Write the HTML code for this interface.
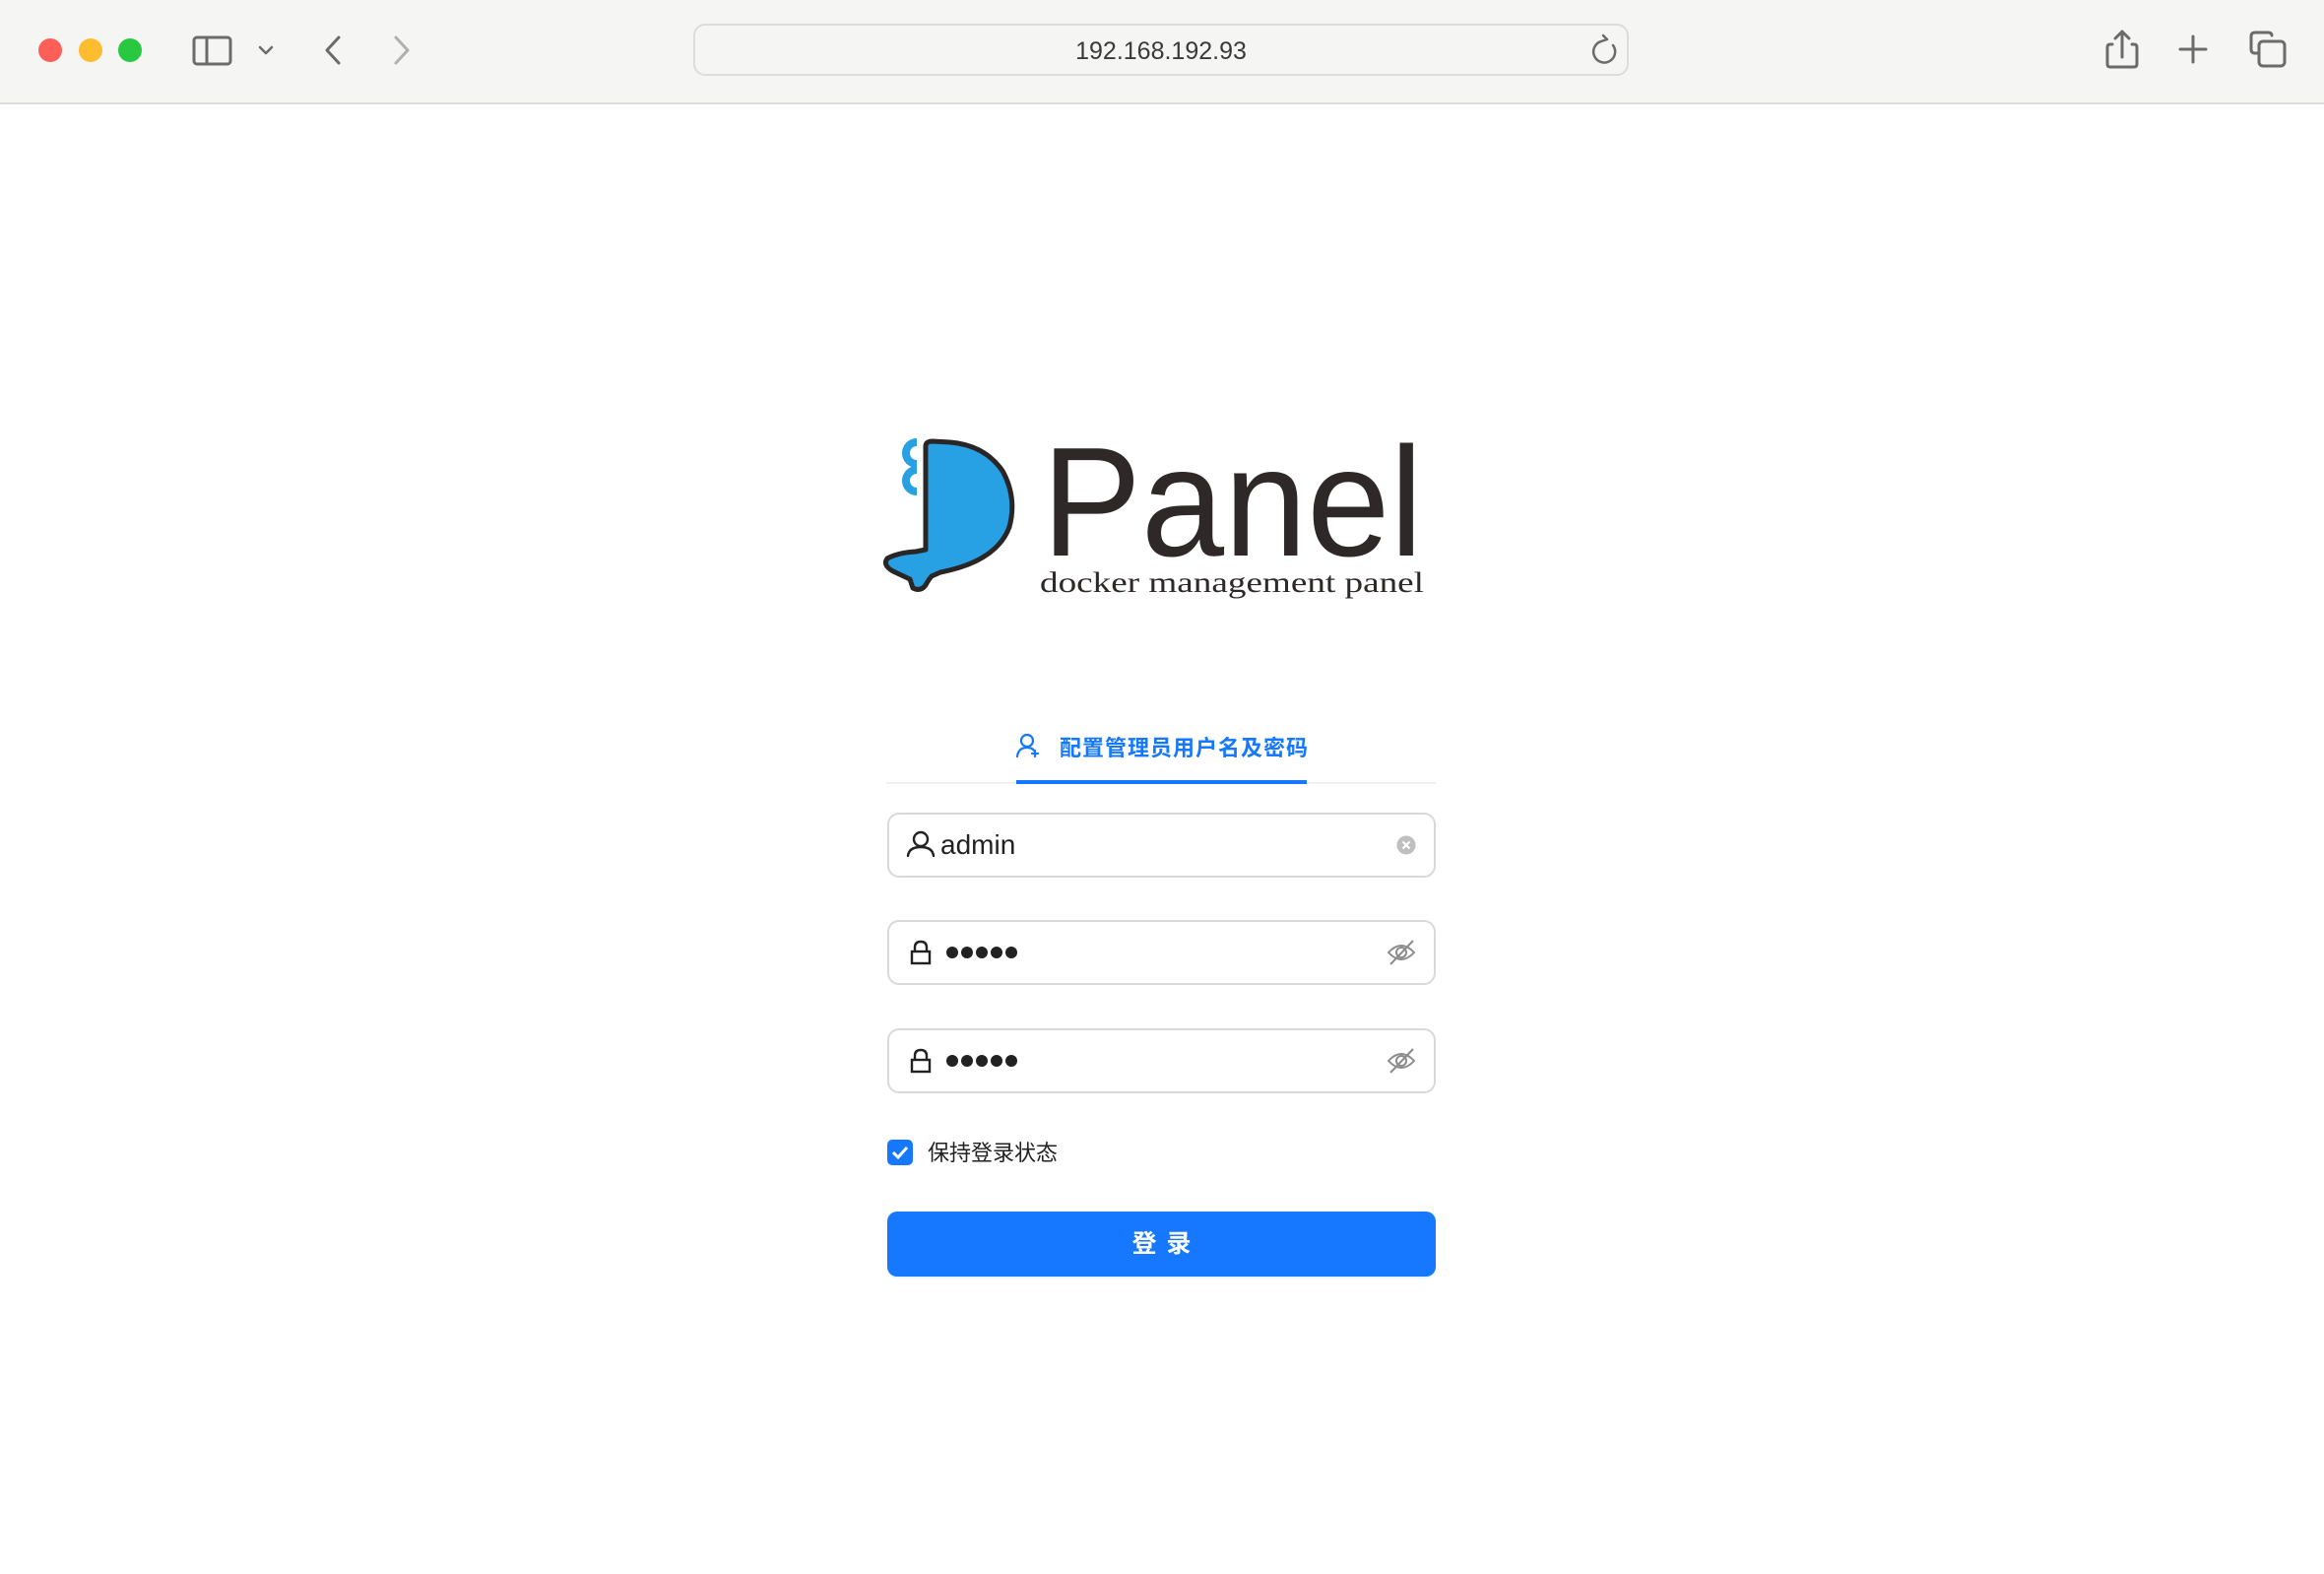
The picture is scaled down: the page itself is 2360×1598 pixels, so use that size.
<!DOCTYPE html>
<html><head><meta charset="utf-8"><style>
html,body{margin:0;padding:0;width:2360px;height:1598px;overflow:hidden;background:#fff;font-family:"Liberation Sans","Noto Sans CJK SC",sans-serif;}
.bar{position:absolute;left:0;top:0;width:2360px;height:104px;background:#f5f5f3;border-bottom:2px solid #dcdcdc;}
.url{position:absolute;left:704px;top:24px;width:950px;height:53px;border:2px solid #dcdcda;border-radius:12px;background:#f5f5f3;box-sizing:border-box;text-align:center;line-height:52px;font-size:25px;color:#3a3a3a;}
.inp{position:absolute;left:901px;width:557px;height:66px;border:2px solid #d9d9d9;border-radius:12px;box-sizing:border-box;}
.t{position:absolute;white-space:nowrap;}
</style></head><body>
<div class="bar"></div>
<div class="url">192.168.192.93</div>
<svg width="2360" height="1598" style="position:absolute;left:0;top:0" xmlns="http://www.w3.org/2000/svg">
<circle cx="51" cy="51" r="12" fill="#fe5f57"/><circle cx="92" cy="51" r="12" fill="#febc2e"/><circle cx="132" cy="51" r="12" fill="#28c840"/>
<g fill="none" stroke="#6b6b6b" stroke-width="3" stroke-linecap="round" stroke-linejoin="round">
<rect x="197" y="38" width="37" height="27" rx="3"/><line x1="210" y1="38" x2="210" y2="65"/>
<path d="M264 48 L270 54 L276 48" stroke-width="2.5"/>
<path d="M344 38 L332 51 L344 64"/>
<path d="M402 38 L414 51 L402 64" stroke="#b0b0b0"/>
<path d="M1638 46 A11 11 0 1 1 1626 42 L1632 40 L1628 36" stroke-width="2.5"/>
<path d="M2145 45 L2143 45 Q2140 45 2140 48 L2140 65 Q2140 68 2143 68 L2167 68 Q2170 68 2170 65 L2170 48 Q2170 45 2167 45 L2165 45"/>
<path d="M2155 58 L2155 32 M2148 39 L2155 32 L2162 39"/>
<path d="M2214 50 L2240 50 M2227 37 L2227 63"/>
<path d="M2307 36 Q2307 33 2303 33 L2290 33 Q2286 33 2286 37 L2286 50 Q2286 54 2290 54 L2294 54"/>
<rect x="2294" y="42" width="26" height="25" rx="4"/>
</g>
<!-- whale -->
<g>
<path d="M931 449 A11 11 0 0 0 931 471 M931 477 A11 11 0 0 0 931 499" fill="none" stroke="#27a0e4" stroke-width="8"/>
<path d="M940 453 Q940 448 947 448 L965 449 Q1000 452 1018 478 Q1033 505 1025 535 Q1012 570 955 581 L946 585 Q942 590 940 594 Q935 601 927 597 L924 588 L907 580 Q896 574 901 567 Q912 561 930 560 L940 558 Z" fill="#27a0e4" stroke="#2b2626" stroke-width="5" stroke-linejoin="round"/>
</g>
<text x="1058" y="564" font-family="Liberation Sans,sans-serif" font-size="158" fill="#2e2828" textLength="387" lengthAdjust="spacingAndGlyphs">Panel</text>
<text x="1056" y="601" font-family="Liberation Serif,serif" font-size="30" fill="#2e2828" textLength="390" lengthAdjust="spacingAndGlyphs">docker management panel</text>
<!-- tab -->
<line x1="900" y1="795" x2="1458" y2="795" stroke="#f0f0f0" stroke-width="2"/>
<line x1="1032" y1="794" x2="1327" y2="794" stroke="#1677ff" stroke-width="4"/>
<g fill="none" stroke="#1677ff" stroke-width="2.2" stroke-linecap="round">
<circle cx="1043" cy="752" r="6"/><path d="M1033 768 Q1034 759 1043 759 Q1048 759 1050 762"/><path d="M1048 765 L1054 765 M1051 762 L1051 768"/>
</g>
<!-- input icons -->
<g fill="none" stroke="#222" stroke-width="2.4" stroke-linecap="round">
<circle cx="935" cy="852" r="7"/><path d="M922 869 Q923 860 935 860 Q947 860 948 869"/>
<path d="M929 966 L929 962 Q929 956 935 956 Q941 956 941 962 L941 966"/><rect x="926" y="966" width="18" height="12"/>
<path d="M929 1076 L929 1072 Q929 1066 935 1066 Q941 1066 941 1072 L941 1076"/><rect x="926" y="1076" width="18" height="12"/>
</g>
<circle cx="1428" cy="858" r="9.5" fill="#bfbfbf"/><path d="M1424.5 854.5 L1431.5 861.5 M1431.5 854.5 L1424.5 861.5" stroke="#fff" stroke-width="2"/>
<g fill="none" stroke="#8c8c8c" stroke-width="2">
<path d="M1410 967 Q1423 953 1436 967 Q1423 981 1410 967 Z"/><circle cx="1423" cy="967" r="5"/><path d="M1412 979 L1435 955"/>
<path d="M1410 1077 Q1423 1063 1436 1077 Q1423 1091 1410 1077 Z"/><circle cx="1423" cy="1077" r="5"/><path d="M1412 1089 L1435 1065"/>
</g>
<g fill="#222"><circle cx="967" cy="967" r="6"/><circle cx="982" cy="967" r="6"/><circle cx="997" cy="967" r="6"/><circle cx="1012" cy="967" r="6"/><circle cx="1027" cy="967" r="6"/>
<circle cx="967" cy="1077" r="6"/><circle cx="982" cy="1077" r="6"/><circle cx="997" cy="1077" r="6"/><circle cx="1012" cy="1077" r="6"/><circle cx="1027" cy="1077" r="6"/></g>
<rect x="901" y="1157" width="26" height="26" rx="5" fill="#1677ff"/>
<path d="M907 1170 L912 1175 L921 1165" fill="none" stroke="#fff" stroke-width="3"/>
</svg>
<div class="t" style="left:1076px;top:742px;font-size:22px;font-weight:bold;color:#1677ff;letter-spacing:1px;">配置管理员用户名及密码</div>
<div class="inp" style="top:825px"></div>
<div class="inp" style="top:934px"></div>
<div class="inp" style="top:1044px"></div>
<div class="t" style="left:955px;top:842px;font-size:28px;color:#222;">admin</div>
<div class="t" style="left:942px;top:1153px;font-size:22px;color:#222;">保持登录状态</div>
<div style="position:absolute;left:901px;top:1230px;width:557px;height:66px;border-radius:10px;background:#1677ff;color:#fff;text-align:center;line-height:66px;font-size:25px;font-weight:bold;letter-spacing:10px;text-indent:10px;box-shadow:0 2px 0 rgba(5,145,255,0.1);">登录</div>
</body></html>
